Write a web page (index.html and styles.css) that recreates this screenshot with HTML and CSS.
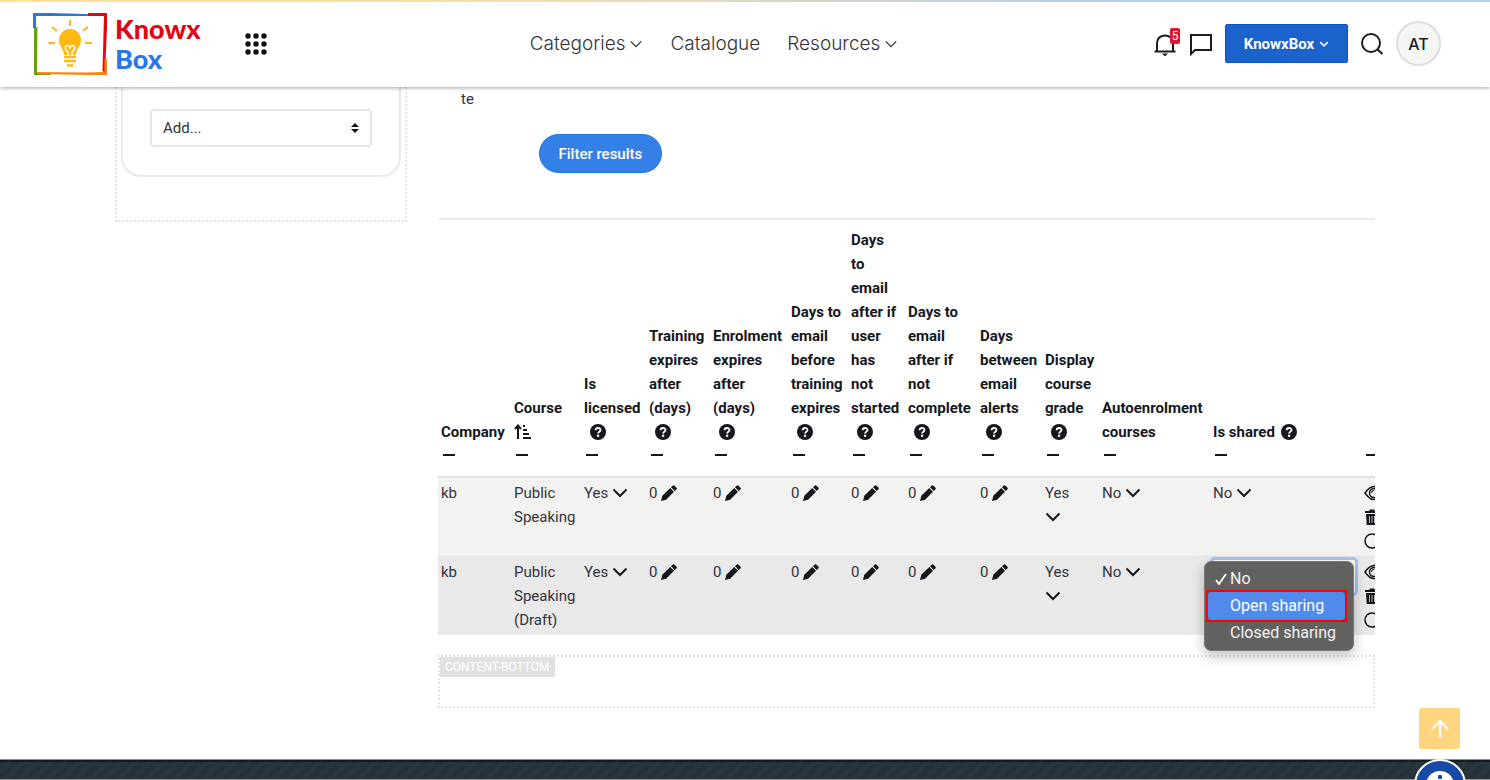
FILE: index.html
```
<!DOCTYPE html>
<html lang="en">
<head>
    <meta charset="UTF-8">
    <meta name="viewport" content="width=device-width, initial-scale=1.0">
    <title>KnowxBox - Course settings</title>
    <link rel="stylesheet" href="styles.css">
</head>
<body>
    <!-- shared icons -->
    <svg class="sprite" aria-hidden="true">
        <symbol id="i-chevron" viewBox="0 0 16 16"><path d="M1.500 4.500 8 11l6.500-6.500" fill="none" stroke="currentColor" stroke-width="2"/></symbol>
        <symbol id="i-thin" viewBox="0 0 16 16"><path d="M2 5l6 6 6-6" fill="none" stroke="currentColor" stroke-width="1.500"/></symbol>
        <symbol id="i-bold" viewBox="0 0 16 16"><path d="M2 5l6 6 6-6" fill="none" stroke="currentColor" stroke-width="2.500"/></symbol>
        <symbol id="i-pencil" viewBox="0 0 16 16"><path d="M0 16l1.300-5.200L9.200 3l3.800 3.800-7.900 7.900zM10 2.200 11.500.700q1-1 2 0l1.800 1.800q1 1 0 2L13.800 6z" fill="currentColor"/></symbol>
        <symbol id="i-help" viewBox="0 0 16 16"><circle cx="8" cy="8" r="8" fill="currentColor"/><path d="M5.600 6.200C5.700 3.300 10.500 3.300 10.500 6c0 1.700-2.400 1.600-2.400 3.400" fill="none" stroke="#fff" stroke-width="1.800"/><circle cx="8.100" cy="11.700" r="1.200" fill="#fff"/></symbol>
        <symbol id="i-minus" viewBox="0 0 16 16"><path d="M2 9h12" stroke="currentColor" stroke-width="2"/></symbol>
        <symbol id="i-eye" viewBox="0 0 20 16"><path d="M1 8q9-13 18 0-9 13-18 0z" fill="none" stroke="currentColor" stroke-width="1.500"/><circle cx="10" cy="8" r="4.500" fill="none" stroke="currentColor" stroke-width="1.500"/><path d="M7.500 8a3 3 0 0 1 3-3" fill="none" stroke="currentColor" stroke-width="1"/></symbol>
        <symbol id="i-trash" viewBox="0 0 16 16"><path d="M1 2h4l1-1.500h4L11 2h4v2H1zM2 5h12l-.700 11H2.700z" fill="currentColor"/><path d="M5.500 7v7M8 7v7M10.500 7v7" stroke="#ddd" stroke-width=".8"/></symbol>
        <symbol id="i-circle" viewBox="0 0 16 16"><circle cx="8" cy="8" r="7" fill="none" stroke="currentColor" stroke-width="1.500"/></symbol>
    </svg>

    <header class="navbar">
        <a class="logo" href="#">
            <svg class="logo-mark" viewBox="0 0 76 64" aria-hidden="true">
                <path d="M2 5v58h17v-2H5L5.500 14 4 16z" fill="#6b9e12"/>
                <path d="M1 1h19l49 1.500V4L4 4V16H1z" fill="#2877e8"/>
                <path d="M5 60l50 .500 16-.500L72 48h3v15H56L6 62z" fill="#fb8615"/>
                <path d="M56 1h19v15l-2 44-2.500-1L72 4H56z" fill="#e20613"/>
                <path d="M72.500 47h2.500v16H57v-2h15.500z" fill="#fb8615"/>
                <g stroke="#fdb913" stroke-width="2" fill="none">
                    <path d="M38 8v6M20 15l5 4M56 15l-5 4M16.500 31H23M53 31h7"/>
                </g>
                <path d="M38 17a11 11 0 0 0-11 11c0 7 5 8.500 5 15h12c0-6.500 5-8 5-15a11 11 0 0 0-11-11z" fill="#fdb913"/>
                <path d="M36 43v-3c-3-2-3.500-5-2-6s3-.500 4 2c1-2.500 2.500-3 4-2s1 4-2 6v3" fill="none" stroke="#fff" stroke-width="1.500"/>
                <path d="M32 45h12M32 49h12M35 53.500h6" stroke="#fdb913" stroke-width="2.500"/>
            </svg>
            <span class="logo-text"><span class="red">Knowx</span><span class="blue">Box</span></span>
        </a>
        <button class="icon-button apps" aria-label="Apps">
            <svg viewBox="0 0 22 22" width="22" height="22"><g fill="#111"><circle cx="3" cy="3" r="2.700"/><circle cx="11" cy="3" r="2.700"/><circle cx="19" cy="3" r="2.700"/><circle cx="3" cy="11" r="2.700"/><circle cx="11" cy="11" r="2.700"/><circle cx="19" cy="11" r="2.700"/><circle cx="3" cy="19" r="2.700"/><circle cx="11" cy="19" r="2.700"/><circle cx="19" cy="19" r="2.700"/></g></svg>
        </button>
        <nav class="menu">
            <a href="#">Categories <svg><use href="#i-thin"/></svg></a>
            <a href="#">Catalogue</a>
            <a href="#">Resources <svg><use href="#i-thin"/></svg></a>
        </nav>
        <div class="tools">
            <button class="icon-button bell" aria-label="Notifications">
                <svg viewBox="0 0 24 24" width="24" height="24"><path d="M1.500 19.500h21M4 19V11c0-10 16-10 16 0v8" fill="none" stroke="#1c1c24" stroke-width="2"/><path d="M9 21.500h6l-3 3z" fill="#1c1c24"/></svg>
                <span class="badge">5</span>
            </button>
            <button class="icon-button" aria-label="Messages">
                <svg viewBox="0 0 24 24" width="24" height="24"><path d="M2 22V3h20v15H6z" fill="none" stroke="#1c1c24" stroke-width="2"/></svg>
            </button>
            <button class="company">KnowxBox <svg><use href="#i-bold"/></svg></button>
            <button class="icon-button" aria-label="Search">
                <svg viewBox="0 0 24 24" width="24" height="24"><circle cx="11" cy="11" r="9" fill="none" stroke="#1c1c24" stroke-width="2"/><path d="M17.500 17.500 22.500 22" stroke="#1c1c24" stroke-width="2.200"/></svg>
            </button>
            <button class="avatar">AT</button>
        </div>
    </header>

    <div class="container">
        <aside class="sidebar">
            <div class="card">
                <select class="add-block" aria-label="Add a block">
                    <option>Add...</option>
                </select>
            </div>
        </aside>

        <main class="content">
            <div class="filter">
                <span>te</span>
                <button class="filter-button">Filter results</button>
            </div>

            <div class="table-wrap">
                <table>
                    <colgroup>
                        <col class="w-company"><col class="w-course"><col class="w-mid"><col class="w-training"><col class="w-enrol"><col class="w-before"><col class="w-small"><col class="w-complete"><col class="w-mid"><col class="w-small"><col class="w-auto"><col class="w-shared"><col class="w-actions">
                    </colgroup>
                    <thead>
                        <tr>
                            <th>Company</th>
                            <th>Course<br><svg class="sort" viewBox="0 0 18 16"><path d="M4 15V2M1 5l3-3.500L7 5" fill="none" stroke="currentColor" stroke-width="2"/><path d="M9 2h2M9 6h4M9 10h6M9 14h8" stroke="currentColor" stroke-width="1.800"/></svg></th>
                            <th>Is<br>licensed<br><svg class="help"><use href="#i-help"/></svg></th>
                            <th>Training<br>expires<br>after<br>(days)<br><svg class="help"><use href="#i-help"/></svg></th>
                            <th>Enrolment<br>expires<br>after<br>(days)<br><svg class="help"><use href="#i-help"/></svg></th>
                            <th>Days to<br>email<br>before<br>training<br>expires<br><svg class="help"><use href="#i-help"/></svg></th>
                            <th>Days<br>to<br>email<br>after if<br>user<br>has<br>not<br>started<br><svg class="help"><use href="#i-help"/></svg></th>
                            <th>Days to<br>email<br>after if<br>not<br>complete<br><svg class="help"><use href="#i-help"/></svg></th>
                            <th>Days<br>between<br>email<br>alerts<br><svg class="help"><use href="#i-help"/></svg></th>
                            <th>Display<br>course<br>grade<br><svg class="help"><use href="#i-help"/></svg></th>
                            <th>Autoenrolment<br>courses</th>
                            <th>Is shared <svg class="help inline"><use href="#i-help"/></svg></th>
                            <th></th>
                        </tr>
                        <tr class="collapse">
                            <th><svg><use href="#i-minus"/></svg></th>
                            <th><svg><use href="#i-minus"/></svg></th>
                            <th><svg><use href="#i-minus"/></svg></th>
                            <th><svg><use href="#i-minus"/></svg></th>
                            <th><svg><use href="#i-minus"/></svg></th>
                            <th><svg><use href="#i-minus"/></svg></th>
                            <th><svg><use href="#i-minus"/></svg></th>
                            <th><svg><use href="#i-minus"/></svg></th>
                            <th><svg><use href="#i-minus"/></svg></th>
                            <th><svg><use href="#i-minus"/></svg></th>
                            <th><svg><use href="#i-minus"/></svg></th>
                            <th><svg><use href="#i-minus"/></svg></th>
                            <th><svg><use href="#i-minus"/></svg></th>
                        </tr>
                    </thead>
                    <tbody>
                        <tr>
                            <td>kb</td>
                            <td>Public<br>Speaking</td>
                            <td><a href="#">Yes <svg><use href="#i-chevron"/></svg></a></td>
                            <td><a href="#">0 <svg><use href="#i-pencil"/></svg></a></td>
                            <td><a href="#">0 <svg><use href="#i-pencil"/></svg></a></td>
                            <td><a href="#">0 <svg><use href="#i-pencil"/></svg></a></td>
                            <td><a href="#">0 <svg><use href="#i-pencil"/></svg></a></td>
                            <td><a href="#">0 <svg><use href="#i-pencil"/></svg></a></td>
                            <td><a href="#">0 <svg><use href="#i-pencil"/></svg></a></td>
                            <td><a href="#">Yes<br><svg><use href="#i-chevron"/></svg></a></td>
                            <td><a href="#">No <svg><use href="#i-chevron"/></svg></a></td>
                            <td><a href="#">No <svg><use href="#i-chevron"/></svg></a></td>
                            <td class="actions"><a href="#" aria-label="View"><svg class="eye"><use href="#i-eye"/></svg></a><a href="#" aria-label="Delete"><svg><use href="#i-trash"/></svg></a><a href="#" aria-label="Select"><svg><use href="#i-circle"/></svg></a></td>
                        </tr>
                        <tr>
                            <td>kb</td>
                            <td>Public<br>Speaking<br>(Draft)</td>
                            <td><a href="#">Yes <svg><use href="#i-chevron"/></svg></a></td>
                            <td><a href="#">0 <svg><use href="#i-pencil"/></svg></a></td>
                            <td><a href="#">0 <svg><use href="#i-pencil"/></svg></a></td>
                            <td><a href="#">0 <svg><use href="#i-pencil"/></svg></a></td>
                            <td><a href="#">0 <svg><use href="#i-pencil"/></svg></a></td>
                            <td><a href="#">0 <svg><use href="#i-pencil"/></svg></a></td>
                            <td><a href="#">0 <svg><use href="#i-pencil"/></svg></a></td>
                            <td><a href="#">Yes<br><svg><use href="#i-chevron"/></svg></a></td>
                            <td><a href="#">No <svg><use href="#i-chevron"/></svg></a></td>
                            <td class="sharing">
                                <select class="share-select" aria-label="Is shared">
                                    <option></option>
                                </select>
                                <div class="dropdown" role="listbox" aria-label="Is shared">
                                    <button class="option checked" role="option" aria-selected="true"><svg viewBox="0 0 12 12"><path d="M1 7l3 4L11 1" fill="none" stroke="currentColor" stroke-width="1.800"/></svg>No</button>
                                    <div class="marked"><button class="option active" role="option">Open sharing</button></div>
                                    <button class="option" role="option">Closed sharing</button>
                                </div>
                            </td>
                            <td class="actions"><a href="#" aria-label="View"><svg class="eye"><use href="#i-eye"/></svg></a><a href="#" aria-label="Delete"><svg><use href="#i-trash"/></svg></a><a href="#" aria-label="Select"><svg><use href="#i-circle"/></svg></a></td>
                        </tr>
                    </tbody>
                </table>
            </div>

            <section class="region"><span class="region-name">CONTENT-BOTTOM</span></section>
        </main>
    </div>

    <footer class="footer"></footer>

    <button class="to-top" aria-label="Back to top">
        <svg viewBox="0 0 20 20" width="20" height="20"><path d="M10 19V3M2 10l8-8 8 8" fill="none" stroke="#fff" stroke-width="2.200"/></svg>
    </button>
    <button class="accessibility" aria-label="Accessibility">
        <svg viewBox="0 0 28 28" width="28" height="28"><circle cx="14" cy="14" r="14" fill="#fff"/><circle cx="14" cy="6" r="2.200" fill="#164aa6"/><path d="M6 10l6 1.500V16l-2 8M22 10l-6 1.500V16l2 8M12 11h4v6h-4z" fill="#164aa6" stroke="#164aa6" stroke-width="2"/></svg>
    </button>
</body>
</html>
```
FILE: styles.css
```
* {
    box-sizing: border-box;
}
body {
    margin: 0;
    height: 100vh;
    overflow: hidden;
    display: flex;
    flex-direction: column;
    font: 15px/24px Roboto, sans-serif;
    color: #33333b;
    background-color: #fff;
}
a {
    color: inherit;
    text-decoration: none;
}
button {
    font: inherit;
    padding: 0;
    border: none;
    cursor: pointer;
}
svg {
    flex: none;
}
.sprite {
    position: absolute;
    width: 0;
    height: 0;
}

/* top bar */
.navbar {
    flex: none;
    display: flex;
    align-items: center;
    height: 87px;
    padding: 0 49px 2px 32px;
    border-top: 2px solid;
    border-image: linear-gradient(90deg, #ffe29a, #f3dfa6 35%, #b5cdf0 75%, #b5cdf0) 1;
    box-shadow: 0 1px 4px rgba(0,0,0,0.35);
    z-index: 2;
}
.logo {
    display: flex;
    align-items: center;
    gap: 7px;
    width: 213px;
}
.logo-mark {
    width: 76px;
    height: 64px;
}
.logo-text {
    display: flex;
    flex-direction: column;
    font: 900 27px/30px Lato, sans-serif;
}
.red { color: #e20613; }
.blue { color: #2877e8; }
.icon-button {
    display: flex;
    background: none;
}
.menu {
    flex: 1;
    display: flex;
    justify-content: center;
    gap: 27px;
    padding-left: 8px;
    font: 300 19px/24px Inter, sans-serif;
    color: #33333b;
}
.menu a {
    display: flex;
    align-items: center;
    gap: 4px;
}
.menu svg {
    width: 14px;
    height: 14px;
}
.tools {
    display: flex;
    align-items: center;
    gap: 12px;
}
.bell {
    position: relative;
}
.badge {
    position: absolute;
    top: -4px;
    right: -3px;
    width: 10px;
    height: 16px;
    border-radius: 2px;
    background-color: #e2122a;
    color: #fff;
    font-size: 12px;
    line-height: 16px;
}
.company {
    display: flex;
    align-items: center;
    justify-content: center;
    gap: 5px;
    width: 123px;
    height: 39px;
    border: 1px solid #0b53c4;
    border-radius: 2px;
    background-color: #1b62cc;
    color: #fff;
    font-weight: 700;
}
.company svg {
    width: 10px;
    height: 10px;
}
.avatar {
    width: 45px;
    height: 45px;
    border: 2px solid #dedede;
    border-radius: 50%;
    background-color: #f5f5f4;
    color: #1c1c24;
    font: 500 16px/24px Inter, sans-serif;
}

/* page */
.container {
    flex: 1;
    display: flex;
    gap: 31px;
    align-items: flex-start;
    width: 100%;
    padding: 0 115px;
}
.sidebar {
    flex: none;
    width: 292px;
    padding: 0 4px 43px;
    border: 2px dotted #e4e4e4;
    border-top: none;
}
.card {
    padding: 22px 27px 28px;
    border: 2px solid #e9e9e9;
    border-top: none;
    border-radius: 0 0 20px 20px;
}
.add-block {
    display: block;
    width: 100%;
    height: 38px;
    padding: 0 11px;
    border: 2px solid #e2e7ec;
    border-radius: 4px;
    appearance: none;
    background: #fff url("data:image/svg+xml,%3Csvg xmlns='http://www.w3.org/2000/svg' viewBox='0 0 8 10'%3E%3Cpath d='M0 4l4-4 4 4zM0 6h8l-4 4z' fill='%23111'/%3E%3C/svg%3E") no-repeat right 11px center / 8px 10px;
    font: inherit;
    color: #33333b;
}
.content {
    flex: 1;
    min-width: 0;
}
.filter {
    display: flex;
    align-items: flex-start;
    gap: 65px;
    height: 133px;
    padding-left: 23px;
    border-bottom: 2px solid #ededed;
}
.filter-button {
    margin-top: 47px;
    width: 123px;
    height: 39px;
    border: 1px solid #1f73e8;
    border-radius: 20px;
    background-color: #3580e6;
    color: #fff;
    font-weight: 500;
}

/* course table */
.table-wrap {
    overflow-x: clip;
    padding: 5px 0 20px;
}
table {
    table-layout: fixed;
    width: 962px;
    border-collapse: separate;
    border-spacing: 0;
}
.w-company { width: 73px; }
.w-course { width: 70px; }
.w-mid { width: 65px; }
.w-training { width: 64px; }
.w-enrol { width: 78px; }
.w-before { width: 60px; }
.w-small { width: 57px; }
.w-complete { width: 72px; }
.w-auto { width: 111px; }
.w-shared { width: 151px; }
.w-actions { width: 39px; }
th, td {
    padding: 3px;
    text-align: left;
    white-space: nowrap;
}
th {
    vertical-align: bottom;
    padding-bottom: 0;
    color: #16161d;
    font-weight: 700;
}
td {
    height: 79px;
    vertical-align: top;
    border-top: 1px solid #dfe2e7;
    background-color: #f2f2f0;
}
tbody tr:last-child td {
    background-color: #e9e9e9;
}
td svg, th svg {
    width: 16px;
    height: 16px;
    vertical-align: -3px;
    color: #16161d;
}
.help {
    margin-left: 6px;
}
.help.inline {
    margin-left: 2px;
}
th .sort {
    width: 18px;
}
.collapse th {
    padding-top: 0;
    height: 33px;
    vertical-align: top;
    line-height: 20px;
    border-bottom: 1px solid #dfe2e7;
}
.actions a {
    display: block;
    height: 24px;
}
td .eye {
    width: 20px;
}
td.sharing {
    position: relative;
    padding: 0;
}
.share-select {
    width: 148px;
    height: 39px;
    border: 3px solid #a9c4f0;
    border-radius: 5px;
    appearance: none;
    background-color: #fff;
}
.dropdown {
    position: absolute;
    top: 4px;
    left: -6px;
    z-index: 1;
    width: 150px;
    padding: 6px 6px 6px 1px;
    border: 1px solid #777;
    border-radius: 7px;
    background-color: #616260;
    box-shadow: 0 5px 14px rgba(0,0,0,0.25);
}
.option {
    display: flex;
    align-items: center;
    gap: 3px;
    width: 100%;
    height: 22px;
    padding-left: 24px;
    background: none;
    color: #f3f3f3;
    font-size: 16px;
}
.option svg {
    width: 12px;
    height: 12px;
    color: #fff;
}
.option.checked {
    padding-left: 9px;
}
.marked {
    border: 2px solid #f00;
}
.option.active {
    height: 28px;
    padding-left: 22px;
    border-radius: 4px;
    background-color: #518aed;
    color: #fff;
}
.region {
    height: 53px;
    border: 2px dotted #e4e4e4;
}
.region-name {
    display: inline-block;
    padding: 0 5px;
    background-color: #e1e1e1;
    color: #fff;
    font-size: 12px;
    line-height: 20px;
    vertical-align: top;
}

/* footer */
.footer {
    flex: none;
    height: 21px;
    border-top: 1px solid #7f8c8c;
    border-bottom: 1px solid #8b9196;
    background: repeating-linear-gradient(135deg, #26323a 0 5px, #2a363e 5px 10px);
    box-shadow: inset 0 2px #0c1f27;
}
.to-top {
    position: fixed;
    right: 30px;
    bottom: 31px;
    display: flex;
    align-items: center;
    justify-content: center;
    width: 41px;
    height: 41px;
    border-radius: 2px;
    background-color: #ffd580;
}
.accessibility {
    position: fixed;
    right: 24px;
    bottom: -31px;
    display: flex;
    align-items: center;
    justify-content: center;
    width: 52px;
    height: 52px;
    border: 2px solid #fff;
    border-radius: 50%;
    background-color: #164aa6;
}
```
